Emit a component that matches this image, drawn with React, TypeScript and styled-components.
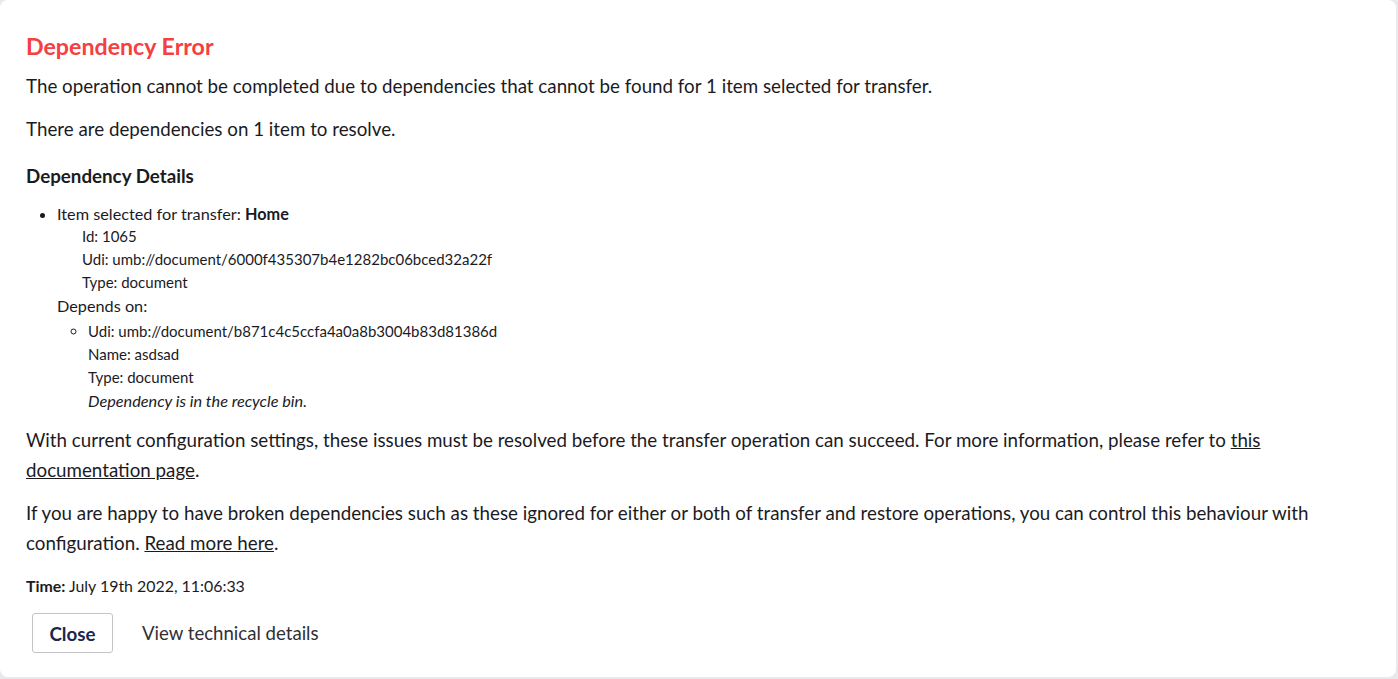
import React from 'react';
import styled, {createGlobalStyle} from 'styled-components';

const GlobalStyle = createGlobalStyle`
  html, body {
    margin: 0;
    padding: 0;
    background: #e9e9eb;
  }
  body {
    font-family: Lato, "Noto Sans", sans-serif;
    color: #1b1b1f;
  }
`;

export default function App() {
  return (
    <>
      <GlobalStyle/>
      <Card>
        <Title>Dependency Error</Title>
        <Paragraph>
          The operation cannot be completed due to dependencies that cannot be found for 1 item selected for transfer.
        </Paragraph>
        <Paragraph>There are dependencies on 1 item to resolve.</Paragraph>
        <SubTitle>Dependency Details</SubTitle>
        <ItemList>
          <li>
            Item selected for transfer: <strong>Home</strong>
            <Detail $indent>Id: 1065</Detail>
            <Detail $indent>Udi: umb://document/6000f435307b4e1282bc06bced32a22f</Detail>
            <Detail $indent>Type: document</Detail>
            <div>Depends on:</div>
            <DependsList>
              <li>
                Udi: umb://document/b871c4c5ccfa4a0a8b3004b83d81386d
                <Detail>Name: asdsad</Detail>
                <Detail>Type: document</Detail>
                <Note>Dependency is in the recycle bin.</Note>
              </li>
            </DependsList>
          </li>
        </ItemList>
        <Paragraph>
          With current configuration settings, these issues must be resolved before the transfer operation can succeed.
          For more information, please refer to <Link href="#">this documentation page</Link>.
        </Paragraph>
        <Paragraph>
          If you are happy to have broken dependencies such as these ignored for either or both of transfer and restore
          operations, you can control this behaviour with configuration. <Link href="#">Read more here</Link>.
        </Paragraph>
        <Time><strong>Time:</strong> July 19th 2022, 11:06:33</Time>
        <Actions>
          <Button>Close</Button>
          <TextButton>View technical details</TextButton>
        </Actions>
      </Card>
    </>
  );
}

const Card = styled.div`
  box-sizing: border-box;
  width: 1396px;
  height: 677px;
  background: #fff;
  border-radius: 8px;
  padding: 29px 26px 0;
`;

const Title = styled.h4`
  margin: 0 0 8px;
  font-size: 23.2px;
  line-height: 34px;
  font-weight: 700;
  color: #f5403f;
`;

const Paragraph = styled.p`
  margin: 0 0 13px;
  font-size: 18.75px;
  line-height: 30px;
  color: #1b1b1f;
`;

const SubTitle = styled.h5`
  margin: 19px 0 13px;
  font-size: 18.75px;
  line-height: 26px;
  font-weight: 700;
`;

const ItemList = styled.ul`
  margin: 0 0 13px;
  padding-left: 31px;
  font-size: 16.25px;
  line-height: 23px;

  strong {
    font-weight: 700;
  }
`;

const DependsList = styled.ul`
  margin: 3px 0 0;
  padding-left: 31px;
  list-style: circle;
  font-size: 15px;
`;

const Detail = styled.div<{ $indent?: boolean }>`
  padding-left: ${p => (p.$indent ? '25px' : '0')};
  font-size: 15px;
`;

const Note = styled.div`
  font-size: 16.25px;
  font-style: italic;
`;

const Link = styled.a`
  color: inherit;
  text-decoration: underline;
`;

const Time = styled.div`
  margin: 17px 0 16px;
  font-size: 15.9px;
  line-height: 22px;

  strong {
    font-weight: 700;
  }
`;

const Actions = styled.div`
  display: flex;
  align-items: center;
  gap: 29px;
  padding-left: 6px;
`;

const Button = styled.button`
  box-sizing: border-box;
  width: 81px;
  height: 40px;
  border: 1px solid #c4c4c8;
  border-radius: 3px;
  background: #fff;
  font-family: Lato, "Noto Sans", sans-serif;
  font-size: 18.75px;
  font-weight: 700;
  color: #1b264f;
  cursor: pointer;
`;

const TextButton = styled.button`
  border: none;
  background: none;
  padding: 0;
  font-family: Lato, "Noto Sans", sans-serif;
  font-size: 18.6px;
  color: #303033;
  cursor: pointer;
`;
